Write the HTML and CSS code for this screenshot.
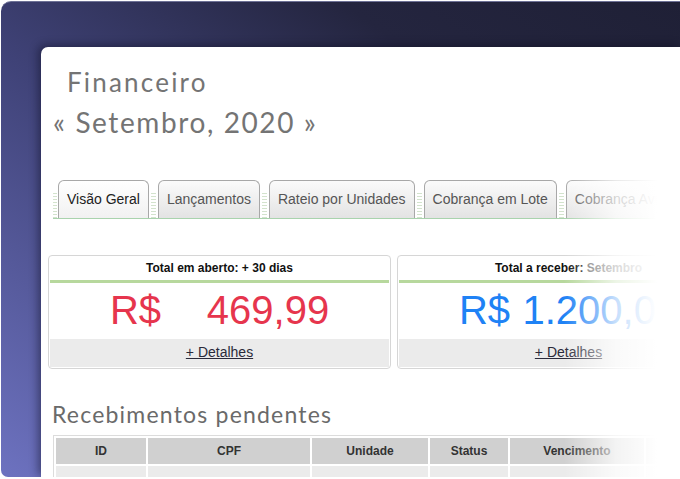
FILE: index.html
```html
<!DOCTYPE html>
<html lang="pt-BR">
<head>
<meta charset="utf-8">
<title>Financeiro</title>
<link rel="stylesheet" href="styles.css">
</head>
<body>
<div class="frame">
  <div class="panel">
    <h1 class="title">Financeiro</h1>
    <h2 class="month">« Setembro, 2020 »</h2>
    <div class="tabs">
      <span class="sep first"></span>
      <div class="tab active">Visão Geral</div>
      <span class="sep"></span>
      <div class="tab">Lançamentos</div>
      <span class="sep"></span>
      <div class="tab">Rateio por Unidades</div>
      <span class="sep"></span>
      <div class="tab">Cobrança em Lote</div>
      <span class="sep"></span>
      <div class="tab">Cobrança Avulsa</div>
      <span class="sep"></span>
      <div class="tab">Relatórios</div>
    </div>
    <div class="cards">
      <div class="card">
        <div class="card-title">Total em aberto: + 30 dias</div>
        <div class="card-value red">R$ <span class="amt">469,99</span></div>
        <div class="card-foot"><a href="#">+ Detalhes</a></div>
      </div>
      <div class="card">
        <div class="card-title">Total a receber: <span class="muted">Setembro</span></div>
        <div class="card-value blue">R$ <span class="amt">1.200,00</span></div>
        <div class="card-foot"><a href="#">+ Detalhes</a></div>
      </div>
    </div>
    <h3 class="section">Recebimentos pendentes</h3>
    <table class="grid">
      <thead>
        <tr>
          <th class="c-id">ID</th>
          <th class="c-cpf">CPF</th>
          <th class="c-uni">Unidade</th>
          <th class="c-st">Status</th>
          <th class="c-venc">Vencimento</th>
          <th class="c-val">Valor</th>
        </tr>
      </thead>
      <tbody>
        <tr><td></td><td></td><td></td><td></td><td></td><td></td></tr>
      </tbody>
    </table>
    <div class="fade"></div>
  </div>
</div>
</body>
</html>
```
FILE: styles.css
```css
html, body {
  margin: 0;
  padding: 0;
  background: #ffffff;
}
body {
  padding: 1px 0 0 1px;
  width: 680px;
  height: 479px;
  box-sizing: border-box;
  overflow: hidden;
}
.frame {
  width: 679px;
  height: 476px;
  box-sizing: border-box;
  padding: 45px 0 0 40px;
  border-radius: 10px 0 0 7px;
  border-top: 1px solid #6d7196;
  background: linear-gradient(to top right, #6d72c0 0%, #3f4277 45%, #24253f 75%, #1f2036 100%);
  overflow: hidden;
}
.panel {
  position: relative;
  height: 100%;
  background: #ffffff;
  border-radius: 7px 0 0 0;
  box-shadow: -3px -2px 9px rgba(10, 10, 30, 0.45);
  overflow: hidden;
  font-family: "Liberation Sans", Arial, sans-serif;
}
.title {
  margin: 18px 0 0 26px;
  font-family: Lato, "Open Sans", sans-serif;
  font-weight: 400;
  font-size: 26px;
  line-height: 34px;
  letter-spacing: 2.2px;
  color: #747474;
}
.month {
  margin: 6px 0 0 12px;
  font-family: Lato, "Open Sans", sans-serif;
  font-weight: 400;
  font-size: 28px;
  line-height: 34px;
  letter-spacing: 1.6px;
  color: #747474;
}
.tabs {
  display: flex;
  align-items: flex-end;
  margin: 41px 0 0 12px;
  height: 38px;
  border-bottom: 1px solid #a9d3ad;
  white-space: nowrap;
}
.sep {
  flex: 0 0 auto;
  width: 5px;
  height: 26px;
  padding: 0 2px;
  background-image: radial-gradient(circle, #d3e3cd 0.5px, transparent 0.7px);
  background-size: 2px 3px;
  background-clip: content-box;
  background-origin: content-box;
}
.sep.first {
  width: 4px;
  padding: 0 1px 0 0;
}
.tab {
  flex: 0 0 auto;
  height: 37px;
  padding: 0 8px;
  border: 1px solid #a8a8a8;
  border-bottom: none;
  border-radius: 6px 6px 0 0;
  background: linear-gradient(#fbfbfb, #e3e3e3);
  font-size: 14px;
  line-height: 36px;
  color: #555555;
}
.tab.active {
  background: linear-gradient(#ffffff, #f1f1f1);
  color: #222222;
}
.cards {
  display: flex;
  gap: 6px;
  margin: 36px 0 0 7px;
}
.card {
  flex: 0 0 343px;
  box-sizing: border-box;
  border: 1px solid #d6d6d6;
  border-radius: 4px;
  padding: 1px;
}
.card-title {
  height: 23px;
  line-height: 23px;
  text-align: center;
  font-size: 12px;
  font-weight: bold;
  color: #111111;
  border-bottom: 3px solid #b7d89d;
}
.card-title .muted {
  color: #666666;
}
.card-value {
  height: 56px;
  line-height: 55px;
  text-align: center;
  font-size: 40px;
}
.card-value.red { color: #e6354d; }
.card-value.blue { color: #1f82f5; }
.amt {
  display: inline-block;
  min-width: 157px;
  text-align: right;
}
.card-foot {
  height: 28px;
  line-height: 27px;
  background: #ebebeb;
  text-align: center;
  font-size: 14px;
}
.card-foot a {
  color: #2a2a3a;
  text-decoration: underline;
}
.section {
  margin: 31px 0 0 11px;
  font-family: Lato, "Open Sans", sans-serif;
  font-weight: 400;
  font-size: 23px;
  line-height: 28px;
  letter-spacing: 1.2px;
  color: #6a6a6a;
}
.grid {
  margin: 7px 0 0 12px;
  border: 1px solid #dcdcdc;
  border-spacing: 2px;
  border-collapse: separate;
  width: 760px;
  table-layout: fixed;
}
.grid th {
  height: 26px;
  padding: 0;
  background: #d0d0d0;
  font-size: 12px;
  font-weight: bold;
  color: #333333;
}
.grid td {
  height: 26px;
  padding: 0;
  background: #ebebeb;
}
.c-id { width: 90px; }
.c-cpf { width: 162px; }
.c-uni { width: 116px; }
.c-st { width: 78px; }
.c-venc { width: 134px; }
.fade {
  position: absolute;
  top: 0;
  right: 0;
  width: 116px;
  height: 100%;
  background: linear-gradient(to right, rgba(255,255,255,0) 0%, rgba(255,255,255,0.75) 45%, #ffffff 80%);
}
```
